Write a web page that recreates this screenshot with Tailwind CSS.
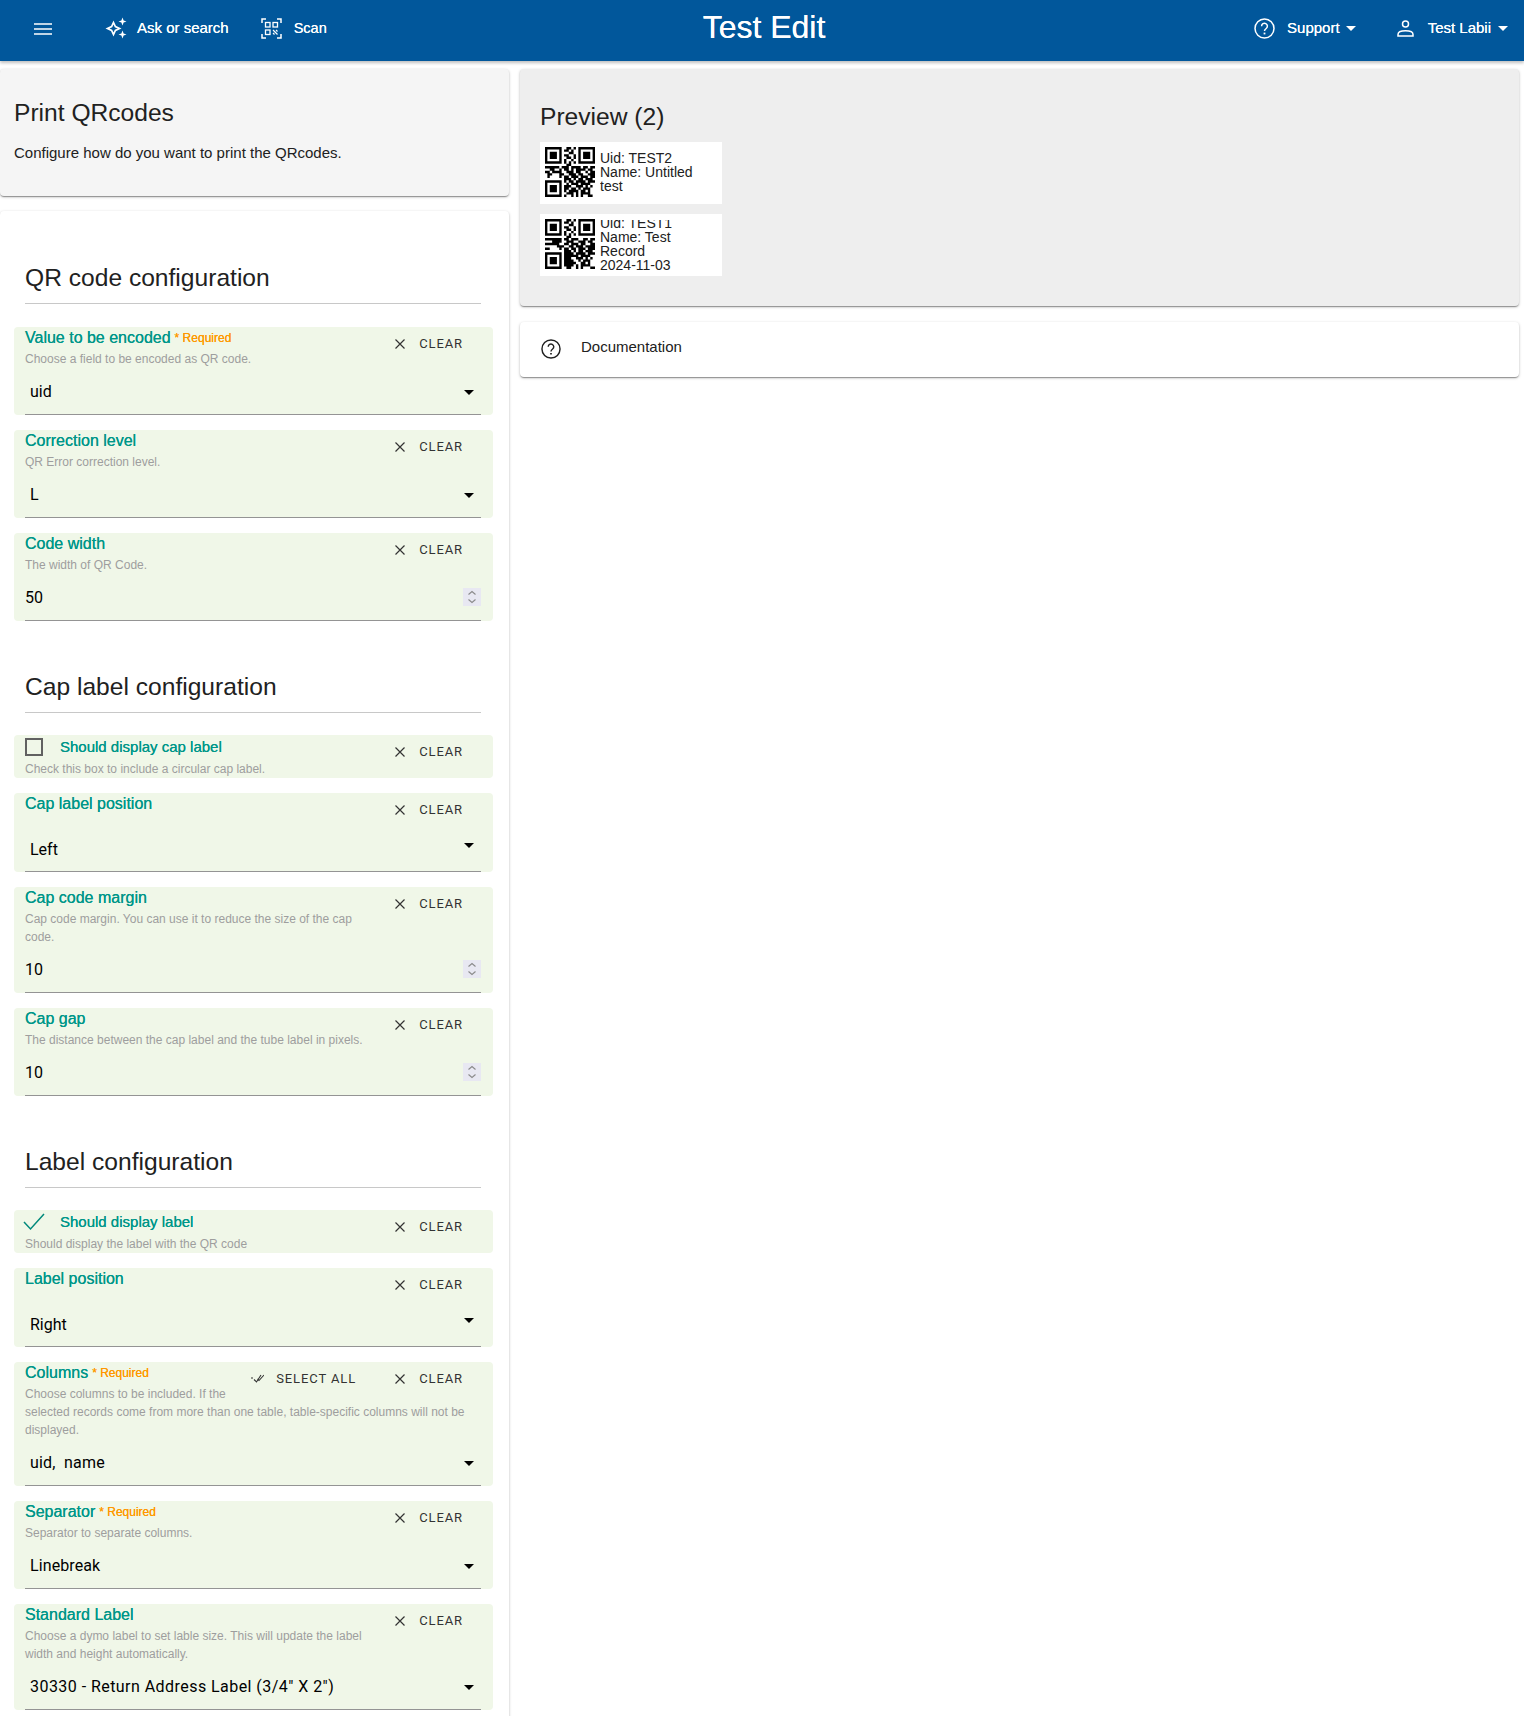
<!DOCTYPE html>
<html lang="en">
<head>
<meta charset="utf-8">
<title>Print QRcodes</title>
<script src="https://cdn.jsdelivr.net/npm/@tailwindcss/browser@4"></script>
</head>
<body class="h-[1716px] overflow-hidden bg-white font-['Liberation_Sans',Arial,sans-serif] text-[#212121]">
<header class="relative z-10 grid h-[61px] grid-cols-[1fr_auto_1fr] items-center bg-[#01579b] pb-[4px] text-white shadow-[0_2px_3px_rgba(0,0,0,.25)]">
  <div class="flex items-center pl-[34px]">
    <svg class="h-[12px] w-[18px]" viewBox="0 0 18 12" fill="none" stroke="#fff" stroke-width="1.6"><path d="M0 1h18M0 6h18M0 11h18"/></svg>
    <svg class="relative top-[-1px] ml-[53px] h-[22px] w-[22px]" viewBox="0 0 22 22" fill="none" stroke="#fff"><path stroke-width="1.7" d="M8.5 5.5 10.4 9.6 14.5 11.5 10.4 13.4 8.5 17.5 6.6 13.4 2.5 11.5 6.6 9.6Z"/><path fill="#fff" stroke="none" d="M17.5 0.5 18.6 3.4 21.5 4.5 18.6 5.6 17.5 8.5 16.4 5.6 13.5 4.5 16.4 3.4ZM17.5 13.5 18.6 16.4 21.5 17.5 18.6 18.6 17.5 21.5 16.4 18.6 13.5 17.5 16.4 16.4Z"/></svg>
    <span class="relative top-[-1px] ml-[10px] text-[15px] leading-5 [text-shadow:0_0_.4px_#fff]">Ask or search</span>
    <svg class="ml-[32px] h-[21px] w-[21px]" viewBox="0 0 21 21" fill="none" stroke="#fff" stroke-width="1.3"><path stroke-width="1.5" d="M1 5V1H5M16 1H20V5M1 16V20H5M16 20H20V16"/><rect x="4.5" y="4.5" width="4.5" height="4.5"/><rect x="12" y="4.5" width="4.5" height="4.5"/><rect x="4.5" y="12" width="4.5" height="4.5"/><path stroke-width="1.2" d="M12 12l1.5 1.5M15 12l1.5 1.5M12 15l1.5 1.5M15 15l1.5 1.5M13.5 13.5l1.5 1.5"/></svg>
    <span class="relative top-[-1px] ml-[12px] text-[14.5px] leading-5 [text-shadow:0_0_.4px_#fff]">Scan</span>
  </div>
  <h1 class="relative top-[-2px] left-[2px] text-[32px] leading-10 [text-shadow:0_0_.4px_#fff]">Test Edit</h1>
  <div class="flex items-center justify-end pr-[16px]">
    <svg class="h-[21px] w-[21px]" viewBox="0 0 21 21" fill="none" stroke="#fff" stroke-width="1.5"><circle cx="10.5" cy="10.5" r="9.5"/><path d="M7.6 8.2a2.9 2.9 0 1 1 4.6 2.3c-1.1.8-1.7 1.3-1.7 2.6"/><path stroke-width="1.8" d="M10.5 14.6v1.8"/></svg>
    <span class="relative top-[-1px] ml-[12px] text-[15px] leading-5 [text-shadow:0_0_.4px_#fff]">Support</span>
    <svg class="ml-[6px] h-[5px] w-[10px]" viewBox="0 0 10 5"><path fill="#fff" d="M0 0h10L5 5z"/></svg>
    <svg class="ml-[41px] h-[17px] w-[17px]" viewBox="0 0 17 17" fill="none" stroke="#fff" stroke-width="1.5"><circle cx="8.5" cy="4" r="3"/><path d="M1 16v-1.6c0-2.2 3.4-3.6 7.500-3.6s7.500 1.400 7.500 3.600V16z"/></svg>
    <span class="relative top-[-1px] ml-[14px] text-[15px] leading-5 [text-shadow:0_0_.4px_#fff]">Test Labii</span>
    <svg class="ml-[7px] h-[5px] w-[10px]" viewBox="0 0 10 5"><path fill="#fff" d="M0 0h10L5 5z"/></svg>
  </div>
</header>

<main class="flex items-start gap-[11px] pt-[8px] pr-[5px]">
  <div class="flex w-[509px] shrink-0 flex-col gap-[15px]">
    <section class="h-[127px] rounded bg-[#f5f5f5] px-[14px] pt-[28px] shadow-[0_2px_1px_-1px_rgba(0,0,0,.2),0_1px_1px_0_rgba(0,0,0,.14),0_1px_3px_0_rgba(0,0,0,.25)]">
      <h2 class="text-[24.6px] leading-8">Print QRcodes</h2>
      <p class="mt-[12px] text-[15px] leading-6">Configure how do you want to print the QRcodes.</p>
    </section>

    <section class="h-[1600px] rounded bg-white pt-[51px] pr-[16px] pl-[14px] shadow-[0_2px_1px_-1px_rgba(0,0,0,.2),0_1px_1px_0_rgba(0,0,0,.14),0_1px_3px_0_rgba(0,0,0,.25)]">
      <h3 class="ml-[11px] mr-[12px] border-b border-[#c8c8c8] pb-[9px] text-[24.6px] leading-8">QR code configuration</h3>

      <div class="mt-[23px] flex flex-col gap-[15px]">
        <div class="rounded-sm bg-[#f0f7e8] pr-[12px] pl-[11px]">
          <div class="float-right flex h-[33px] items-center pr-[18px] pl-[24px] font-['Roboto',sans-serif] text-[13px] tracking-[.9px] text-[#333]"><svg class="mr-[14px] h-[10px] w-[10px]" viewBox="0 0 10 10" stroke="#333" stroke-width="1.2"><path d="M.5.5l9 9M9.500.5l-9 9"/></svg>CLEAR</div>
          <div class="flex h-[22px] items-center text-base leading-5 text-[#009688] [text-shadow:0_0_.3px_#009688]">Value to be encoded<span class="ml-[4px] text-xs text-[#ff9800] [text-shadow:0_0_.3px_#ff9800]">* Required</span></div>
          <p class="mt-[1px] text-xs leading-[18px] text-[#9e9e9e]">Choose a field to be encoded as QR code.</p>
          <div class="flex h-[47px] items-center justify-between border-b border-[#949494] pt-[2px] pr-[7px] pl-[5px] font-['Roboto',sans-serif] text-base text-black">uid<svg class="h-[5px] w-[10px]" viewBox="0 0 10 5"><path d="M0 0h10L5 5z"/></svg></div>
        </div>
        <div class="rounded-sm bg-[#f0f7e8] pr-[12px] pl-[11px]">
          <div class="float-right flex h-[33px] items-center pr-[18px] pl-[24px] font-['Roboto',sans-serif] text-[13px] tracking-[.9px] text-[#333]"><svg class="mr-[14px] h-[10px] w-[10px]" viewBox="0 0 10 10" stroke="#333" stroke-width="1.2"><path d="M.5.5l9 9M9.500.5l-9 9"/></svg>CLEAR</div>
          <div class="flex h-[22px] items-center text-base leading-5 text-[#009688] [text-shadow:0_0_.3px_#009688]">Correction level</div>
          <p class="mt-[1px] text-xs leading-[18px] text-[#9e9e9e]">QR Error correction level.</p>
          <div class="flex h-[47px] items-center justify-between border-b border-[#949494] pt-[2px] pr-[7px] pl-[5px] font-['Roboto',sans-serif] text-base text-black">L<svg class="h-[5px] w-[10px]" viewBox="0 0 10 5"><path d="M0 0h10L5 5z"/></svg></div>
        </div>
        <div class="rounded-sm bg-[#f0f7e8] pr-[12px] pl-[11px]">
          <div class="float-right flex h-[33px] items-center pr-[18px] pl-[24px] font-['Roboto',sans-serif] text-[13px] tracking-[.9px] text-[#333]"><svg class="mr-[14px] h-[10px] w-[10px]" viewBox="0 0 10 10" stroke="#333" stroke-width="1.2"><path d="M.5.5l9 9M9.500.5l-9 9"/></svg>CLEAR</div>
          <div class="flex h-[22px] items-center text-base leading-5 text-[#009688] [text-shadow:0_0_.3px_#009688]">Code width</div>
          <p class="mt-[1px] text-xs leading-[18px] text-[#9e9e9e]">The width of QR Code.</p>
          <div class="flex h-[47px] items-center justify-between border-b border-[#949494] pt-[2px] font-['Roboto',sans-serif] text-base text-black">50<svg class="relative top-[-1px] h-[18px] w-[18px]" viewBox="0 0 18 18"><rect width="18" height="18" fill="#e8e8f2"/><path fill="none" stroke="#8a8a8a" stroke-width="1.1" d="M5.500 6.500 9 3.500l3.500 3M5.500 11.500 9 14.500l3.500-3"/></svg></div>
        </div>
      </div>

      <h3 class="ml-[11px] mr-[12px] mt-[50px] border-b border-[#c8c8c8] pb-[9px] text-[24.6px] leading-8">Cap label configuration</h3>

      <div class="mt-[22px] flex flex-col gap-[15px]">
        <div class="rounded-sm bg-[#f0f7e8] pr-[12px] pl-[11px]">
          <div class="float-right flex h-[33px] items-center pr-[18px] pl-[24px] font-['Roboto',sans-serif] text-[13px] tracking-[.9px] text-[#333]"><svg class="mr-[14px] h-[10px] w-[10px]" viewBox="0 0 10 10" stroke="#333" stroke-width="1.2"><path d="M.5.5l9 9M9.500.5l-9 9"/></svg>CLEAR</div>
          <div class="flex h-[24px] items-center text-[15px] leading-5 text-[#009688] [text-shadow:0_0_.3px_#009688]"><span class="mr-[17px] block h-[18px] w-[18px] border-2 border-[#616161]"></span>Should display cap label</div>
          <p class="mt-[1px] text-xs leading-[18px] text-[#9e9e9e]">Check this box to include a circular cap label.</p>
        </div>
        <div class="rounded-sm bg-[#f0f7e8] pr-[12px] pl-[11px]">
          <div class="float-right flex h-[33px] items-center pr-[18px] pl-[24px] font-['Roboto',sans-serif] text-[13px] tracking-[.9px] text-[#333]"><svg class="mr-[14px] h-[10px] w-[10px]" viewBox="0 0 10 10" stroke="#333" stroke-width="1.2"><path d="M.5.5l9 9M9.500.5l-9 9"/></svg>CLEAR</div>
          <div class="flex h-[22px] items-center text-base leading-5 text-[#009688] [text-shadow:0_0_.3px_#009688]">Cap label position</div>
          <div class="clear-both mt-[10px] flex h-[46px] items-center justify-between border-b border-[#949494] pt-[2px] pr-[7px] pl-[5px] font-['Roboto',sans-serif] text-base text-black">Left<svg class="relative top-[-4px] h-[5px] w-[10px]" viewBox="0 0 10 5"><path d="M0 0h10L5 5z"/></svg></div>
        </div>
        <div class="rounded-sm bg-[#f0f7e8] pr-[12px] pl-[11px]">
          <div class="float-right flex h-[33px] items-center pr-[18px] pl-[24px] font-['Roboto',sans-serif] text-[13px] tracking-[.9px] text-[#333]"><svg class="mr-[14px] h-[10px] w-[10px]" viewBox="0 0 10 10" stroke="#333" stroke-width="1.2"><path d="M.5.5l9 9M9.500.5l-9 9"/></svg>CLEAR</div>
          <div class="flex h-[22px] items-center text-base leading-5 text-[#009688] [text-shadow:0_0_.3px_#009688]">Cap code margin</div>
          <p class="mt-[1px] text-xs leading-[18px] text-[#9e9e9e]">Cap code margin. You can use it to reduce the size of the cap code.</p>
          <div class="flex h-[47px] items-center justify-between border-b border-[#949494] pt-[2px] font-['Roboto',sans-serif] text-base text-black">10<svg class="relative top-[-1px] h-[18px] w-[18px]" viewBox="0 0 18 18"><rect width="18" height="18" fill="#e8e8f2"/><path fill="none" stroke="#8a8a8a" stroke-width="1.1" d="M5.500 6.500 9 3.500l3.500 3M5.500 11.500 9 14.500l3.500-3"/></svg></div>
        </div>
        <div class="rounded-sm bg-[#f0f7e8] pr-[12px] pl-[11px]">
          <div class="float-right flex h-[33px] items-center pr-[18px] pl-[24px] font-['Roboto',sans-serif] text-[13px] tracking-[.9px] text-[#333]"><svg class="mr-[14px] h-[10px] w-[10px]" viewBox="0 0 10 10" stroke="#333" stroke-width="1.2"><path d="M.5.5l9 9M9.500.5l-9 9"/></svg>CLEAR</div>
          <div class="flex h-[22px] items-center text-base leading-5 text-[#009688] [text-shadow:0_0_.3px_#009688]">Cap gap</div>
          <p class="mt-[1px] text-xs leading-[18px] text-[#9e9e9e]">The distance between the cap label and the tube label in pixels.</p>
          <div class="flex h-[47px] items-center justify-between border-b border-[#949494] pt-[2px] font-['Roboto',sans-serif] text-base text-black">10<svg class="relative top-[-1px] h-[18px] w-[18px]" viewBox="0 0 18 18"><rect width="18" height="18" fill="#e8e8f2"/><path fill="none" stroke="#8a8a8a" stroke-width="1.1" d="M5.500 6.500 9 3.500l3.500 3M5.500 11.500 9 14.500l3.500-3"/></svg></div>
        </div>
      </div>

      <h3 class="ml-[11px] mr-[12px] mt-[50px] border-b border-[#c8c8c8] pb-[9px] text-[24.6px] leading-8">Label configuration</h3>

      <div class="mt-[22px] flex flex-col gap-[15px]">
        <div class="rounded-sm bg-[#f0f7e8] pr-[12px] pl-[11px]">
          <div class="float-right flex h-[33px] items-center pr-[18px] pl-[24px] font-['Roboto',sans-serif] text-[13px] tracking-[.9px] text-[#333]"><svg class="mr-[14px] h-[10px] w-[10px]" viewBox="0 0 10 10" stroke="#333" stroke-width="1.2"><path d="M.5.5l9 9M9.500.5l-9 9"/></svg>CLEAR</div>
          <div class="flex h-[24px] items-center text-[15px] leading-5 text-[#009688] [text-shadow:0_0_.3px_#009688]"><svg class="mr-[15px] -ml-[2px] h-[18px] w-[22px]" viewBox="0 0 22 18" fill="none" stroke="#00897b" stroke-width="1.5"><path d="M1 9l6.500 7L21 1"/></svg>Should display label</div>
          <p class="mt-[1px] text-xs leading-[18px] text-[#9e9e9e]">Should display the label with the QR code</p>
        </div>
        <div class="rounded-sm bg-[#f0f7e8] pr-[12px] pl-[11px]">
          <div class="float-right flex h-[33px] items-center pr-[18px] pl-[24px] font-['Roboto',sans-serif] text-[13px] tracking-[.9px] text-[#333]"><svg class="mr-[14px] h-[10px] w-[10px]" viewBox="0 0 10 10" stroke="#333" stroke-width="1.2"><path d="M.5.5l9 9M9.500.5l-9 9"/></svg>CLEAR</div>
          <div class="flex h-[22px] items-center text-base leading-5 text-[#009688] [text-shadow:0_0_.3px_#009688]">Label position</div>
          <div class="clear-both mt-[10px] flex h-[46px] items-center justify-between border-b border-[#949494] pt-[2px] pr-[7px] pl-[5px] font-['Roboto',sans-serif] text-base text-black">Right<svg class="relative top-[-4px] h-[5px] w-[10px]" viewBox="0 0 10 5"><path d="M0 0h10L5 5z"/></svg></div>
        </div>
        <div class="rounded-sm bg-[#f0f7e8] pr-[12px] pl-[11px]">
          <div class="float-right flex h-[33px] items-center pr-[18px] pl-[6px] font-['Roboto',sans-serif] text-[13px] tracking-[.9px] text-[#333]"><svg class="mr-[12px] h-[9px] w-[13px]" viewBox="0 0 13 9" fill="none" stroke="#333" stroke-width="1.1"><path d="M0 4h2M3 5.500 5.500 8 10 1M6.500 5 8 6.500 13 1"/></svg><span class="mr-[39px]">SELECT ALL</span><svg class="mr-[14px] h-[10px] w-[10px]" viewBox="0 0 10 10" stroke="#333" stroke-width="1.2"><path d="M.5.5l9 9M9.500.5l-9 9"/></svg>CLEAR</div>
          <div class="flex h-[22px] items-center text-base leading-5 text-[#009688] [text-shadow:0_0_.3px_#009688]">Columns<span class="ml-[4px] text-xs text-[#ff9800] [text-shadow:0_0_.3px_#ff9800]">* Required</span></div>
          <p class="mt-[1px] text-xs leading-[18px] text-[#9e9e9e]">Choose columns to be included. If the selected records come from more than one table, table-specific columns will not be displayed.</p>
          <div class="flex h-[47px] items-center justify-between border-b border-[#949494] pt-[2px] pr-[7px] pl-[5px] font-['Roboto',sans-serif] text-base tracking-[.2px] text-black"><span class="whitespace-pre">uid,  name</span><svg class="h-[5px] w-[10px]" viewBox="0 0 10 5"><path d="M0 0h10L5 5z"/></svg></div>
        </div>
        <div class="rounded-sm bg-[#f0f7e8] pr-[12px] pl-[11px]">
          <div class="float-right flex h-[33px] items-center pr-[18px] pl-[24px] font-['Roboto',sans-serif] text-[13px] tracking-[.9px] text-[#333]"><svg class="mr-[14px] h-[10px] w-[10px]" viewBox="0 0 10 10" stroke="#333" stroke-width="1.2"><path d="M.5.5l9 9M9.500.5l-9 9"/></svg>CLEAR</div>
          <div class="flex h-[22px] items-center text-base leading-5 text-[#009688] [text-shadow:0_0_.3px_#009688]">Separator<span class="ml-[4px] text-xs text-[#ff9800] [text-shadow:0_0_.3px_#ff9800]">* Required</span></div>
          <p class="mt-[1px] text-xs leading-[18px] text-[#9e9e9e]">Separator to separate columns.</p>
          <div class="flex h-[47px] items-center justify-between border-b border-[#949494] pt-[2px] pr-[7px] pl-[5px] font-['Roboto',sans-serif] text-base tracking-[.1px] text-black">Linebreak<svg class="h-[5px] w-[10px]" viewBox="0 0 10 5"><path d="M0 0h10L5 5z"/></svg></div>
        </div>
        <div class="rounded-sm bg-[#f0f7e8] pr-[12px] pl-[11px]">
          <div class="float-right flex h-[33px] items-center pr-[18px] pl-[24px] font-['Roboto',sans-serif] text-[13px] tracking-[.9px] text-[#333]"><svg class="mr-[14px] h-[10px] w-[10px]" viewBox="0 0 10 10" stroke="#333" stroke-width="1.2"><path d="M.5.5l9 9M9.500.5l-9 9"/></svg>CLEAR</div>
          <div class="flex h-[22px] items-center text-base leading-5 text-[#009688] [text-shadow:0_0_.3px_#009688]">Standard Label</div>
          <p class="mt-[1px] text-xs leading-[18px] text-[#9e9e9e]">Choose a dymo label to set lable size. This will update the label width and height automatically.</p>
          <div class="flex h-[47px] items-center justify-between border-b border-[#949494] pt-[2px] pr-[7px] pl-[5px] font-['Roboto',sans-serif] text-base tracking-[.45px] text-black">30330 - Return Address Label (3/4" X 2")<svg class="h-[5px] w-[10px]" viewBox="0 0 10 5"><path d="M0 0h10L5 5z"/></svg></div>
        </div>
      </div>
    </section>
  </div>

  <div class="flex min-w-0 flex-1 flex-col gap-[16px]">
    <section class="h-[237px] rounded bg-[#eeeeee] px-[20px] pt-[32px] shadow-[0_2px_1px_-1px_rgba(0,0,0,.2),0_1px_1px_0_rgba(0,0,0,.14),0_1px_3px_0_rgba(0,0,0,.25)]">
      <h2 class="text-[24.6px] leading-8">Preview (2)</h2>
      <div class="mt-[9px] flex flex-col gap-[10px]">
        <div class="flex h-[62px] w-[182px] items-start gap-[5px] bg-white p-[5px]">
          <svg class="h-[50px] w-[50px] shrink-0" viewBox="0 0 21 21" fill="none" stroke="#000"><path d="M.5.5h6v6h-6zM14.500.5h6v6h-6zM.5 14.500h6v6h-6z"/><path fill="#000" stroke="none" d="M2 2h3v3H2zM16 2h3v3h-3zM2 16h3v3H2z"/><path d="M9 .5h2M12 .5h1M8 1.500h2M11 1.500h1M10 2.500h2M8 3.500h2M12 3.500h1M9 4.500h2M12 4.500h1M8 5.500h1M11 5.500h1M8 6.500h1M10 6.500h1M12 6.500h1M9 7.500h2M0 8.500h6M7 8.500h3M11 8.500h4M16 8.500h2M19 8.500h2M2 9.500h2M6 9.500h1M8 9.500h2M11 9.500h1M13 9.500h4M18 9.500h2M0 10.500h2M3 10.500h4M9 10.500h3M13 10.500h2M17 10.500h1M19 10.500h2M1 11.500h2M6 11.500h2M10 11.500h3M14 11.500h2M18 11.500h3M1 12.500h1M6 12.500h1M8 12.500h2M11 12.500h3M15 12.500h3M19 12.500h2M8 13.500h3M12 13.500h1M14 13.500h2M17 13.500h3M8 14.500h1M10 14.500h2M13 14.500h4M18 14.500h3M9 15.500h1M11 15.500h3M15 15.500h4M8 16.500h3M13 16.500h3M17 16.500h1M19 16.500h1M8 17.500h2M11 17.500h2M14 17.500h1M16 17.500h3M8 18.500h1M10 18.500h4M15 18.500h2M18 18.500h1M9 19.500h3M13 19.500h1M15 19.500h4M8 20.500h1M11 20.500h1M13 20.500h1M15 20.500h1M18 20.500h2"/></svg>
          <div class="mt-[1px] flex h-[52px] items-center overflow-hidden"><p class="mb-[4px] w-[112px] text-sm leading-[14px]">Uid: TEST2<br>Name: Untitled test</p></div>
        </div>
        <div class="flex h-[62px] w-[182px] items-start gap-[5px] bg-white p-[5px]">
          <svg class="h-[50px] w-[50px] shrink-0" viewBox="0 0 21 21" fill="none" stroke="#000"><path d="M.5.5h6v6h-6zM14.500.5h6v6h-6zM.5 14.500h6v6h-6z"/><path fill="#000" stroke="none" d="M2 2h3v3H2zM16 2h3v3h-3zM2 16h3v3H2z"/><path d="M9 .5h2M12 .5h1M8 1.500h2M11 1.500h1M10 2.500h2M8 3.500h2M12 3.500h1M9 4.500h2M12 4.500h1M8 5.500h1M11 5.500h1M8 6.500h1M10 6.500h1M12 6.500h1M9 7.500h2M0 8.500h7M8 8.500h2M11 8.500h3M16 8.500h2M19 8.500h2M3 9.500h4M9 9.500h3M14 9.500h3M18 9.500h2M0 10.500h6M8 10.500h2M11 10.500h3M15 10.500h2M19 10.500h2M5 11.500h3M10 11.500h2M13 11.500h3M17 11.500h4M0 12.500h2M6 12.500h1M8 12.500h2M11 12.500h2M14 12.500h3M18 12.500h3M8 13.500h3M12 13.500h1M14 13.500h2M17 13.500h3M8 14.500h4M13 14.500h4M18 14.500h3M8 15.500h3M11 15.500h3M15 15.500h4M8 16.500h3M13 16.500h3M17 16.500h1M19 16.500h1M8 17.500h4M14 17.500h1M16 17.500h3M8 18.500h5M15 18.500h2M18 18.500h1M8 19.500h4M13 19.500h1M15 19.500h4M9 20.500h2M13 20.500h1M15 20.500h1M19 20.500h2"/></svg>
          <div class="mt-[1px] flex h-[52px] items-center overflow-hidden"><p class="mb-[4px] w-[112px] text-sm leading-[14px]">Uid: TEST1<br>Name: Test Record<br>2024-11-03</p></div>
        </div>
      </div>
    </section>
    <section class="flex h-[55px] items-center rounded bg-white pl-[21px] shadow-[0_2px_1px_-1px_rgba(0,0,0,.2),0_1px_1px_0_rgba(0,0,0,.14),0_1px_3px_0_rgba(0,0,0,.25)]">
      <svg class="relative top-[-1px] h-[20px] w-[20px]" viewBox="0 0 21 21" fill="none" stroke="#212121" stroke-width="1.5"><circle cx="10.500" cy="10.500" r="9.500"/><path d="M7.600 8.200a2.900 2.900 0 1 1 4.600 2.300c-1.100.8-1.700 1.300-1.700 2.600"/><path stroke-width="1.800" d="M10.500 14.600v1.800"/></svg>
      <span class="relative top-[-2px] ml-[20px] text-[15px]">Documentation</span>
    </section>
  </div>
</main>
</body>
</html>
